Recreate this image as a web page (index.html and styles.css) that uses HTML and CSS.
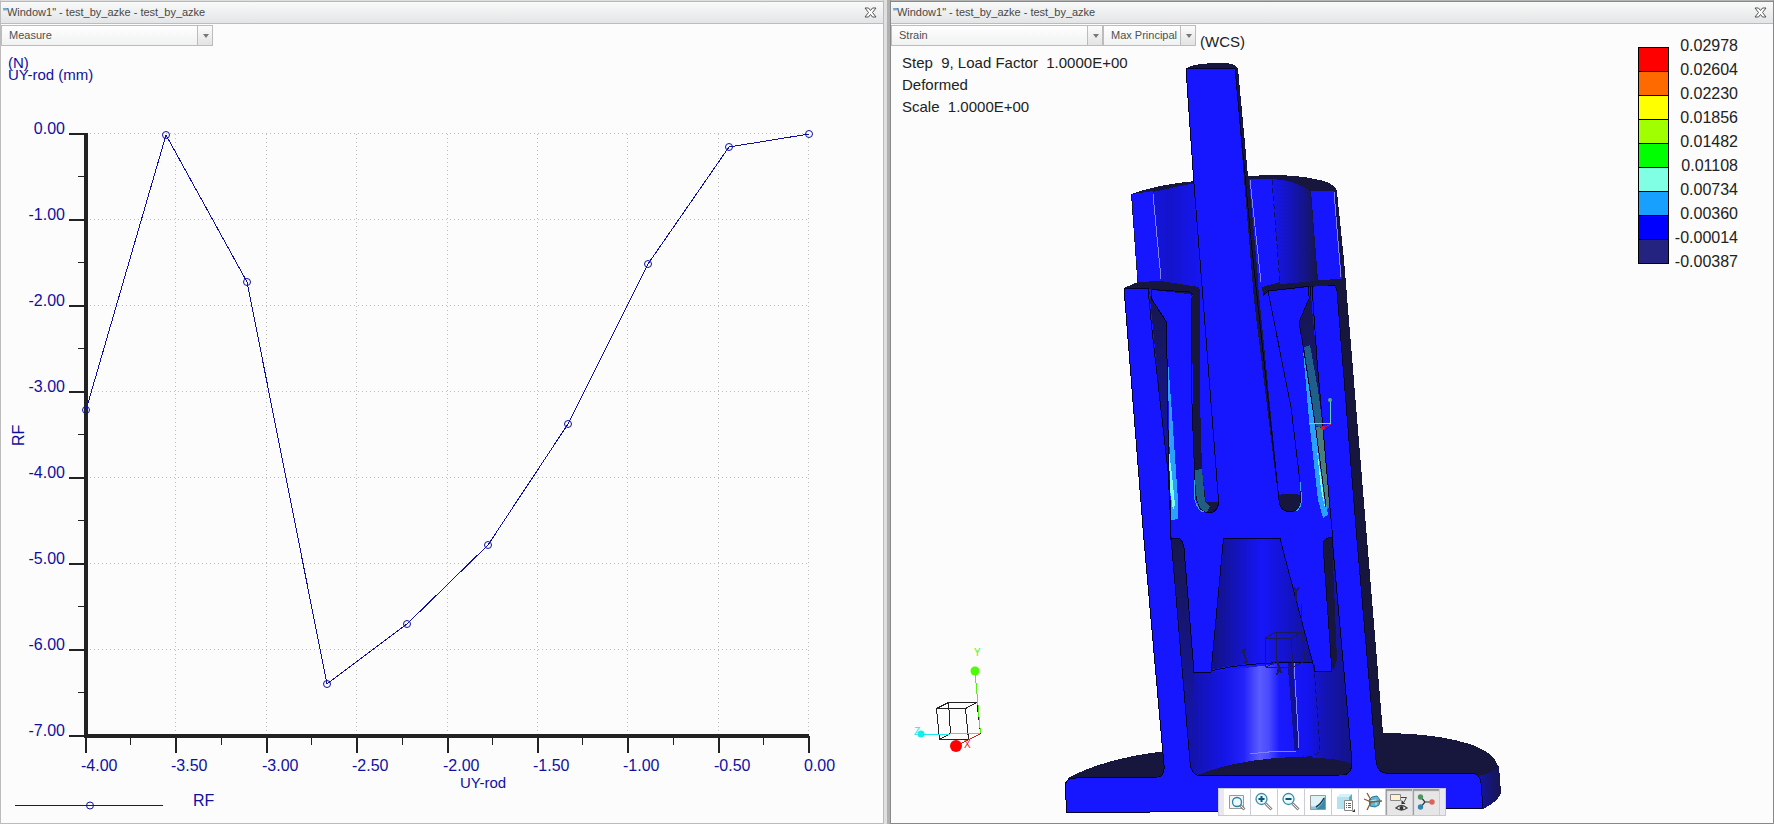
FILE: index.html
```html
<!DOCTYPE html>
<html lang="en">

<head>
    <meta charset="UTF-8">
    <title>test_by_azke</title>
    <link rel="stylesheet" href="styles.css">
</head>

<body>

    <section class="window">
        <header class="titlebar">
            <h2>"Window1" - test_by_azke - test_by_azke</h2>
            <button class="close" aria-label="Close">
                <svg width="13" height="11" viewBox="0 0 13 11"><path d="M1 1h3.5l2 2.500 2-2.500H12L8.500 5.500 12 10H8.500l-2-2.500-2 2.500H1l3.500-4.500z" /></svg>
            </button>
        </header>
        <div class="stage">
            <svg class="drawing" id="graph" viewBox="1 24 882 799">
                <g id="grid" class="grid"></g>
                <g id="ticks" class="ticks"></g>
                <path class="axis" d="M86 133V736H809" />
                <g id="labels" class="labels"></g>
                <text class="name" x="8" y="68">(N)</text>
                <text class="name" x="8" y="80">UY-rod (mm)</text>
                <text class="name" x="460" y="788">UY-rod</text>
                <text class="name big" transform="translate(24 446) rotate(-90)">RF</text>
                <g id="curve" class="curve"></g>
                <!-- curve legend -->
                <g class="curve">
                    <path d="M15 805.5H163" />
                    <circle cx="90" cy="805.5" r="3.5" />
                </g>
                <text class="name big" x="193" y="806">RF</text>
            </svg>
            <div class="selectors">
                <label class="drop wide"><select aria-label="Result type"><option>Measure</option></select></label>
            </div>
        </div>
    </section>

    <div class="splitter"></div>

    <section class="window active">
        <header class="titlebar">
            <h2>"Window1" - test_by_azke - test_by_azke</h2>
            <button class="close" aria-label="Close">
                <svg width="13" height="11" viewBox="0 0 13 11"><path d="M1 1h3.5l2 2.500 2-2.500H12L8.500 5.500 12 10H8.500l-2-2.500-2 2.500H1l3.500-4.500z" /></svg>
            </button>
        </header>
        <div class="stage">
            <svg class="drawing model" viewBox="891 24 882 799">
                <defs>
                    <linearGradient id="cylLeft">
                        <stop offset="0" stop-color="#1414dc" />
                        <stop offset=".35" stop-color="#1414cc" />
                        <stop offset="1" stop-color="#1616fa" />
                    </linearGradient>
                    <linearGradient id="cylRight">
                        <stop offset="0" stop-color="#1616f0" />
                        <stop offset=".45" stop-color="#1414b4" />
                        <stop offset=".8" stop-color="#151578" />
                        <stop offset="1" stop-color="#17173e" />
                    </linearGradient>
                    <linearGradient id="bore">
                        <stop offset="0" stop-color="#131388" />
                        <stop offset=".12" stop-color="#1313ac" />
                        <stop offset=".3" stop-color="#1515e8" />
                        <stop offset=".4" stop-color="#2222fa" />
                        <stop offset=".49" stop-color="#5c5cff" />
                        <stop offset=".54" stop-color="#4a4aff" />
                        <stop offset=".6" stop-color="#1a1aff" />
                        <stop offset=".76" stop-color="#1414f0" />
                        <stop offset=".84" stop-color="#1414b8" />
                        <stop offset="1" stop-color="#141484" />
                    </linearGradient>
                    <linearGradient id="cone">
                        <stop offset="0" stop-color="#121280" />
                        <stop offset=".3" stop-color="#1414c8" />
                        <stop offset=".5" stop-color="#1616f8" />
                        <stop offset=".7" stop-color="#1414d4" />
                        <stop offset="1" stop-color="#131390" />
                    </linearGradient>
                    <linearGradient id="shade" x1="0" y1="0" x2="0" y2="1">
                        <stop offset="0" stop-color="#17174c" />
                        <stop offset="1" stop-color="#1414b0" />
                    </linearGradient>
                    <linearGradient id="rim">
                        <stop offset="0" stop-color="#1414a8" />
                        <stop offset="1" stop-color="#17174a" />
                    </linearGradient>
                </defs>

                <!-- base plate -->
                <path class="dark" d="M1068 778Q1105 758 1166 751V780H1068z" />
                <path class="dark" d="M1380 733Q1440 733 1475 746Q1497 755 1498 768L1501 792Q1500 800 1483 809L1380 790z" />
                <path fill="url(#rim)" d="M1478 776Q1492 774 1499 766L1501 792Q1500 800 1483 809z" />

                <!-- upper cylinder -->
                <path class="dark" d="M1131 194Q1160 184 1195 181L1250 176Q1290 173 1320 180Q1336 184 1337 192L1344 260 1383 733V780H1360L1138 290z" />
                <path class="face" d="M1132 194L1153 191 1161 281 1138 282z" />
                <path fill="url(#cylLeft)" d="M1153 192Q1175 187 1195 183L1205 288 1161 281z" />
                <path class="face" d="M1249 179L1272 179 1280 282 1262 287 1260 300z" />
                <path fill="url(#cylRight)" d="M1272 179Q1295 180 1310 191L1318 281 1280 285z" />
                <path class="face" d="M1311 191L1334 191 1342 279 1318 280z" />
                <path class="glint" d="M1153 194L1161 279M1334 192L1341 277M1250 180L1261 282" />
                <path class="dash" d="M1272 180L1280 284" />

                <!-- section face -->
                <path class="face line" d="M1124 288L1148 288 1151 289 1192 294 1202 300 1258 300 1268 291 1309 286 1334 285Q1336 286 1337 291L1357 540 1376 760Q1377 773 1387 773.5L1470 773Q1480 773 1481 783L1483 808 1067 813 1065 787Q1065 778 1076 778L1158 777Q1165 776 1164 765L1144 540z" />
                <path class="dark" d="M1124 288L1138 282 1160 281 1198 288 1198 295 1152 290 1148 288z" />
                <path class="dark" d="M1267 291L1281 284 1342 279 1344 287 1336 287 1334 285 1309 287z" />
                <path class="face" d="M1199 286L1262 284 1264 310 1200 310z" />

                <!-- left wall recess -->
                <path fill="url(#shade)" d="M1149 289L1151 298 1166 321 1168 430 1170 490 1166 460z" />
                <path class="stroke" d="M1148 288L1152 330 1169 480 1171 540M1151 290V298L1166.5 322 1168 430 1169 490 1171 510M1151 289.5L1190 292Q1192.5 293 1192 298" />
                <path class="strain" d="M1167.5 354L1171 400 1178 500 1178 519 1171 520 1170 470z" />
                <path class="strain-high" d="M1169 450L1172 475 1175 505 1173 510 1170 490z" />

                <!-- left slot -->
                <path class="dark" d="M1192 296L1200 288 1200 400 1202 470 1206 502H1218Q1219 512 1209 512.5 1198 513 1196 500L1193 430z" />
                <path fill="#205f80" d="M1195 470L1202 469 1205 502 1210 506 1207 512Q1198 511 1196 500z" />
                <path class="stroke" d="M1192 298L1191.5 390 1195 485Q1196 513 1209 513 1219 512 1218.5 500" />
                <path class="blueline" d="M1194 480L1195 500Q1198 511 1204 512" />

                <!-- right slot -->
                <path class="dark" d="M1279 495Q1289 492 1300 495L1301 503Q1300 511 1289 511.5 1281 511 1280 505z" />
                <path class="stroke" d="M1268 291L1291 407 1300 482 1301 500Q1301 512 1289 511.5 1280 511 1279 500M1268 291L1308 286.5V296" />
                <path class="blueline" d="M1300 482L1301.5 496Q1302 508 1296 511" />

                <!-- right wall recess -->
                <path fill="url(#shade)" d="M1299 322L1311 295 1313 320 1317 360 1330 508 1324 500 1307 370z" />
                <path fill="#205f88" d="M1304 347L1310 345 1318 390 1323 428 1316 426z" />
                <path fill="#4d7d78" d="M1316 427L1323 428 1330 507 1326 510z" />
                <path class="strain" d="M1303 350L1312 400 1321 470 1328 515 1323 518 1318 500 1309 420z" />
                <path class="strain-high" d="M1317 450L1321 475 1325 508 1321 490z" />
                <path class="stroke" d="M1310 286L1311 294 1299 322 1303 345 1316 430 1326 507M1312 286L1317 360 1330 508 1333 540" />

                <!-- push rod -->
                <path class="face" d="M1186 69L1235 68 1252 250 1278 494H1218L1200 260z" />
                <path class="dark" d="M1186 69Q1190 64 1215 63Q1236 62 1238 69L1247 165 1258 285 1279 496 1276 480 1254 300 1235 69z" />
                <path class="stroke" d="M1186 69L1194 184 1200 260 1218.5 500M1186 68.5H1235L1252 250 1279 500" />

                <!-- lower bore -->
                <path fill="url(#bore)" d="M1171 538L1180 539Q1183 541 1184 548L1194 672H1211L1312 660 1333 540 1352 762Q1352 774 1343 775L1199 775Q1191 774 1190 762z" />
                <path fill="url(#shade)" d="M1171 538L1180 539Q1183 541 1184 548L1194 672 1192 740 1184 680z" />
                <path class="face" d="M1184 536L1323 536 1323 545 1332 671H1315L1280 538H1223L1211 672H1194L1184 548z" />
                <path fill="url(#cone)" d="M1223 538.5H1280L1313 662Q1250 660 1211 670z" />
                <path class="dark" d="M1323 543Q1324 538 1332 537L1337 660 1334 669 1332 668z" />
                <path class="dark" d="M1198 775Q1240 758 1300 757Q1340 758 1352 764 1351 774 1343 775z" />
                <path class="crease" d="M1290 662L1297 750" />
                <path class="glint" d="M1294 662L1299 748M1250 754Q1270 751 1296 751" />
                <path class="dash" d="M1314 665L1320 748Q1320 757 1303 757" />
                <path class="stroke" d="M1171 538L1180 539Q1183 541 1184 548L1194 672.5H1211L1223.5 538.5H1280L1315 671.5H1332L1323 545Q1323 538 1332 537M1171 537L1190 762Q1191 775 1200 775.5L1343 775Q1352 774 1352 762L1332 537M1211 671Q1245 662 1312 662" />

                <!-- ghost cube and its letters -->
                <path class="ghost" d="M1265 638H1291L1293 667H1266zM1276 632H1302L1305 661H1277zM1265 638L1276 632M1291 638L1302 632M1293 667L1305 661M1266 667L1277 661M1301 604V620" />
                <path class="ghost thick" d="M1294 587L1296 592 1299 587M1296 592V601M1246 649L1243 651 1245 657 1247 661 1244 663M1277 661L1279 667 1277 675M1279 667L1281 673" />

                <!-- small csys -->
                <path fill="none" stroke="#5fd0b0" d="M1330.5 400V423" />
                <path fill="none" stroke="#40e0ff" d="M1309 423.5H1331" />
                <path fill="none" stroke="#d01830" d="M1331 424L1323 428" />
                <circle cx="1330" cy="400" r="2" fill="#50b080" />
                <circle cx="1323" cy="428" r="2" fill="#ff1010" />

                <!-- view orientation triad -->
                <path class="cube" d="M936.5 708.5H965.5L968.5 739.5H939.5zM948.5 702.5H977L980.5 733.5H950.5zM936.5 708.5L948.5 702.5M965.5 708.5L977 702.5M939.5 739.5L950.5 733.5" />
                <path fill="none" stroke="#58f010" d="M975 672L980.5 733" />
                <path fill="none" stroke="#20e8f0" d="M921 734.5L980 733.5" />
                <path fill="none" stroke="#d02020" d="M980 734L956 746" />
                <circle cx="975" cy="671" r="4.5" fill="#4cff00" />
                <circle cx="921" cy="734" r="3.5" fill="#10f0e8" />
                <circle cx="956" cy="746" r="6" fill="#ff0000" />
                <text class="triad" x="974" y="656" fill="#58f010">Y</text>
                <text class="triad" x="914" y="735" fill="#20e8f0">Z</text>
                <text class="triad" x="964" y="748" fill="#e02020">X</text>
            </svg>

            <div class="selectors">
                <label class="drop wide"><select aria-label="Quantity"><option>Strain</option></select></label>
                <label class="drop"><select aria-label="Component"><option>Max Principal</option></select></label>
                <span class="wcs">(WCS)</span>
            </div>

            <div class="notes">
                <p>Step  9, Load Factor  1.0000E+00</p>
                <p>Deformed</p>
                <p>Scale  1.0000E+00</p>
            </div>

            <div class="legend">
                <ul class="swatches">
                    <li class="c1"></li>
                    <li class="c2"></li>
                    <li class="c3"></li>
                    <li class="c4"></li>
                    <li class="c5"></li>
                    <li class="c6"></li>
                    <li class="c7"></li>
                    <li class="c8"></li>
                    <li class="c9"></li>
                </ul>
                <ul class="values">
                    <li>0.02978</li>
                    <li>0.02604</li>
                    <li>0.02230</li>
                    <li>0.01856</li>
                    <li>0.01482</li>
                    <li>0.01108</li>
                    <li>0.00734</li>
                    <li>0.00360</li>
                    <li>-0.00014</li>
                    <li>-0.00387</li>
                </ul>
            </div>

            <div class="tools">
                <button aria-label="Refit">
                    <svg viewBox="0 0 20 20"><path d="M2.500 3.500h14v13h-14z" fill="#f4f4f4" stroke="#999" /><path d="M13 13l4.500 4.500" stroke="#888" stroke-width="3" /><path d="M13 13l4 4" stroke="#eee" /><circle cx="10" cy="10" r="4.500" fill="#eafaff" stroke="#2b7f9f" stroke-width="1.3" /></svg>
                </button>
                <button aria-label="Zoom in">
                    <svg viewBox="0 0 20 20"><path d="M11.500 11.500l6 6" stroke="#888" stroke-width="3" /><path d="M12 12l5 5" stroke="#eee" /><circle cx="7.500" cy="7" r="5.500" fill="#eafaff" stroke="#3a8fae" stroke-width="1.3" /><path d="M4.500 7h6M7.500 4v6" stroke="#0e5572" stroke-width="2" /></svg>
                </button>
                <button aria-label="Zoom out">
                    <svg viewBox="0 0 20 20"><path d="M11.500 11.500l6 6" stroke="#888" stroke-width="3" /><path d="M12 12l5 5" stroke="#eee" /><circle cx="7.500" cy="7" r="5.500" fill="#eafaff" stroke="#3a8fae" stroke-width="1.3" /><path d="M4.500 7h6" stroke="#0e5572" stroke-width="2" /></svg>
                </button>
                <button aria-label="Repaint">
                    <svg viewBox="0 0 20 20"><path d="M2.500 3.500h15v14h-15z" fill="#8cc4da" stroke="#999" /><path d="M3 4h14Q14 12 8 14Q5 15 3 14z" fill="#dff2f8" /><path d="M17 5v12H8Q15 13 17 5z" fill="#3d88a6" /><path d="M16 6Q13 12 8 15" stroke="#123f55" stroke-width="1.5" /></svg>
                </button>
                <button aria-label="Display style">
                    <svg viewBox="0 0 20 20"><path d="M2 5l3-3h12l-3 3z" fill="#d4f2fa" /><path d="M14 5l3-3v12l-3 3z" fill="#58adc8" /><path d="M2 5h12v12H2z" fill="#b4e2f0" /><path d="M9.500 8.500h8v10h-8z" fill="#fff" stroke="#888" /><path d="M11 11.500h1M13 11.500h3M11 13.500h1M13 13.500h3M11 15.500h1M13 15.500h3" stroke="#666" /><path d="M20 17v3h-3z" fill="#333" /></svg>
                </button>
                <button aria-label="Datum display">
                    <svg viewBox="0 0 20 20"><path d="M7 8l3-3 5-1 3 4-1 5-4 2-5-1z" fill="#5fb9d6" stroke="#24779a" /><path d="M9 9l5-1v5" stroke="#c8f0fa" /><path d="M5 1l4 7M2 7l7 3-4 8M8 10l12-1" stroke="#8a5a2a" stroke-width="1.3" /></svg>
                </button>
                <button class="pressed" aria-label="Annotation display">
                    <svg viewBox="0 0 20 20"><path d="M1.500 2.500h10v6h-10z" fill="#fff3cf" stroke="#888" /><path d="M12 5.500h5.500L15 10" stroke="#444" /><path d="M12.500 8v4h4z" fill="#333" /><path d="M7 16q5.500-5 11 0q-5.500 4-11 0z" fill="#fff" stroke="#444" stroke-width="1.5" /><circle cx="12.500" cy="16" r="2" fill="#333" /></svg>
                </button>
                <button class="pressed" aria-label="Spin center">
                    <svg viewBox="0 0 20 20"><path d="M4 4l5 6-5 6M9 10h7" stroke="#333" stroke-width="1.2" /><circle cx="4.500" cy="5" r="2.700" fill="#4f9560" /><circle cx="4.500" cy="15" r="2.700" fill="#2f86ad" /><circle cx="16" cy="10" r="2.700" fill="#e0605a" /></svg>
                </button>
            </div>
        </div>
    </section>

    <script src="graph.js"></script>
</body>

</html>
```

FILE: styles.css
```css
* {
    box-sizing: border-box;
}

body,
html {
    margin: 0;
    padding: 0;
    height: 100%;
    font-family: "Liberation Sans", Arial, sans-serif;
    background-color: #fcfcfc;
}

body {
    display: flex;
    overflow: hidden;
}

/* windows */

.window {
    flex: 1;
    min-width: 0;
    display: flex;
    flex-direction: column;
    border: 1px solid #bcbcbc;
    border-top-color: #dedede;
    background-color: #fcfcfc;
}

.window.active {
    border-color: #888;
    border-top-color: #b4b4b4;
}

.splitter {
    width: 6px;
    background-color: #e0e0e0;
    border-right: 3px solid #b0b0b0;
}

.titlebar {
    display: flex;
    align-items: center;
    justify-content: space-between;
    height: 23px;
    padding: 0 6px 1px 2px;
    border-top: 1px solid #b8b8b8;
    border-bottom: 1px solid #bcbcbc;
    background: linear-gradient(#f8f9f9, #e4e5e6);
}

.active .titlebar {
    border-top-color: #888;
}

.titlebar h2 {
    margin: 0;
    font-size: 11px;
    line-height: 18px;
    font-weight: normal;
    color: #484848;
}

.close {
    display: flex;
    padding: 0;
    border: 0;
    background: none;
}

.close path {
    fill: #fff;
    stroke: #555;
}

.stage {
    position: relative;
    flex: 1;
    min-height: 0;
}

.drawing {
    display: block;
    width: 100%;
    height: 100%;
}

/* drop-downs lie over the drawing */

.selectors {
    position: absolute;
    top: 1px;
    left: 0;
    display: flex;
}

.drop {
    position: relative;
    width: 93px;
    height: 21px;
}

.drop.wide {
    width: 212px;
}

.drop select {
    display: block;
    width: 100%;
    height: 100%;
    padding: 0 7px 2px;
    border: 1px solid #bcbcbc;
    border-radius: 0;
    appearance: none;
    background: linear-gradient(#fff, #f0f1f1);
    font-family: inherit;
    font-size: 11px;
    color: #505050;
}

/* arrow part */
.drop::before {
    content: "";
    position: absolute;
    top: 1px;
    right: 1px;
    bottom: 1px;
    width: 14px;
    border-left: 1px solid #bcbcbc;
    background: linear-gradient(#fcfcfc, #e2e3e4);
    pointer-events: none;
}

.drop::after {
    content: "";
    position: absolute;
    top: 9px;
    right: 4px;
    border: 3px solid transparent;
    border-top: 4px solid #777;
    border-bottom: 0;
    pointer-events: none;
}

.wcs {
    padding: 8px 0 0 4px;
    font-size: 15px;
    line-height: 18px;
    color: #222;
}

/* graph */

.grid path {
    stroke: #bcbcbc;
    stroke-dasharray: 1 3;
}

.ticks path {
    stroke: #222;
}

.ticks .major {
    stroke-width: 2;
}

.axis {
    fill: none;
    stroke: #222;
    stroke-width: 4;
}

.labels text {
    font-size: 16px;
    fill: #1010a0;
}

.labels .left {
    text-anchor: end;
}

.name {
    font-size: 15px;
    fill: #1010a0;
}

.name.big {
    font-size: 16px;
}

.curve {
    fill: none;
    stroke: #1010a0;
}

.curve path {
    shape-rendering: crispEdges;
}

/* model */

.model path {
    shape-rendering: crispEdges;
}

.face {
    fill: #1616ff;
}

.dark {
    fill: #17173e;
}

.strain {
    fill: #2aa0ff;
}

.strain-high {
    fill: #80ffee;
}

.line,
.stroke {
    stroke: #04042c;
}

.stroke,
.glint,
.dash,
.crease,
.blueline,
.ghost,
.cube {
    fill: none;
}

.glint {
    stroke: #8080ff;
}

.dash {
    stroke: #10106c;
    stroke-dasharray: 5 3;
}

.crease {
    stroke: #121290;
    stroke-width: 5;
}

.blueline {
    stroke: #3aa0e8;
}

.ghost {
    stroke: #1c1c50;
}

.ghost.thick {
    stroke-width: 2;
}

.cube {
    stroke: #222;
}

.triad {
    font-size: 10px;
}

/* text over the model */

.notes {
    position: absolute;
    top: 28px;
    left: 11px;
    font-size: 15px;
    line-height: 22px;
    color: #222;
}

.notes p {
    margin: 0;
    white-space: pre;
}

.legend {
    position: absolute;
    top: 10px;
    right: 35px;
    display: flex;
    gap: 6px;
}

.legend ul {
    margin: 0;
    padding: 0;
    list-style: none;
}

.legend .swatches {
    width: 31px;
    margin-top: 13px;
}

.swatches li {
    height: 24px;
    border: 1px solid #000;
    border-bottom: 0;
}

.swatches li:last-child {
    height: 25px;
    border-bottom: 1px solid #000;
}

.c1 { background-color: #ff0000; }
.c2 { background-color: #ff6a00; }
.c3 { background-color: #ffff00; }
.c4 { background-color: #a0ff00; }
.c5 { background-color: #00ff00; }
.c6 { background-color: #80ffe4; }
.c7 { background-color: #18a0ff; }
.c8 { background-color: #0000ff; }
.c9 { background-color: #242480; }

.values li {
    height: 24px;
    font-size: 16px;
    line-height: 24px;
    text-align: right;
    color: #222;
}

/* view toolbar */

.tools {
    position: absolute;
    bottom: 7px;
    left: 50%;
    display: flex;
    height: 28px;
    padding: 0 5px;
    border: 1px solid #c8c8d4;
    background-color: #e8e8ee;
    transform: translateX(-50%);
}

.tools button {
    width: 27px;
    padding: 3px;
    border: 0;
    border-right: 1px solid #ccccd6;
    background-color: #fff;
}

.tools svg {
    display: block;
    width: 20px;
    height: 20px;
    fill: none;
}

.tools .pressed {
    background-color: #e6e6e6;
    box-shadow: inset 1px 2px 1px #999;
}
```

FILE: graph.js
```js
var NS = 'http://www.w3.org/2000/svg';

// [UY-rod in mm, RF in N]
var points = [
    [-4, -3.21], [-3.555, -0.01], [-3.11, -1.72], [-2.667, -6.4], [-2.222, -5.7],
    [-1.778, -4.78], [-1.333, -3.37], [-0.889, -1.51], [-0.444, -0.15], [0, 0]
];

function px(x) {
    return Math.round(809 + x * 180.75);
}

function py(y) {
    return Math.round(134 - y * 86);
}

function add(parent, tag, attrs, text) {
    var el = document.createElementNS(NS, tag);
    for (var key in attrs) {
        el.setAttribute(key, attrs[key]);
    }
    if (text) {
        el.textContent = text;
    }
    document.getElementById(parent).appendChild(el);
}

// vertical axis
for (var i = 0; i <= 7; i++) {
    var y = py(-i);
    add('ticks', 'path', { d: 'M69 ' + y + 'H86', 'class': 'major' });
    add('labels', 'text', { x: 65, y: y, 'class': 'left' }, (i ? '-' : '') + i.toFixed(2));
    if (i < 7) {
        add('grid', 'path', { d: 'M90 ' + (y - 0.5) + 'H809' });
        add('ticks', 'path', { d: 'M78 ' + (y + 42.5) + 'H86' });
    }
}

// horizontal axis
for (var j = 0; j <= 8; j++) {
    var value = -4 + j / 2;
    var x = px(value);
    add('ticks', 'path', { d: 'M' + x + ' 736V753', 'class': 'major' });
    add('labels', 'text', { x: x - 5, y: 771 }, value.toFixed(2));
    if (j > 0) {
        add('grid', 'path', { d: 'M' + (x - 0.5) + ' 134V734' });
        add('ticks', 'path', { d: 'M' + (x - 45.5) + ' 736V745' });
    }
}

// curve
add('curve', 'path', {
    d: 'M' + points.map(function (p) {
        return px(p[0]) + ' ' + py(p[1]);
    }).join('L')
});
points.forEach(function (p) {
    add('curve', 'circle', { cx: px(p[0]), cy: py(p[1]), r: 3.5 });
});
```
